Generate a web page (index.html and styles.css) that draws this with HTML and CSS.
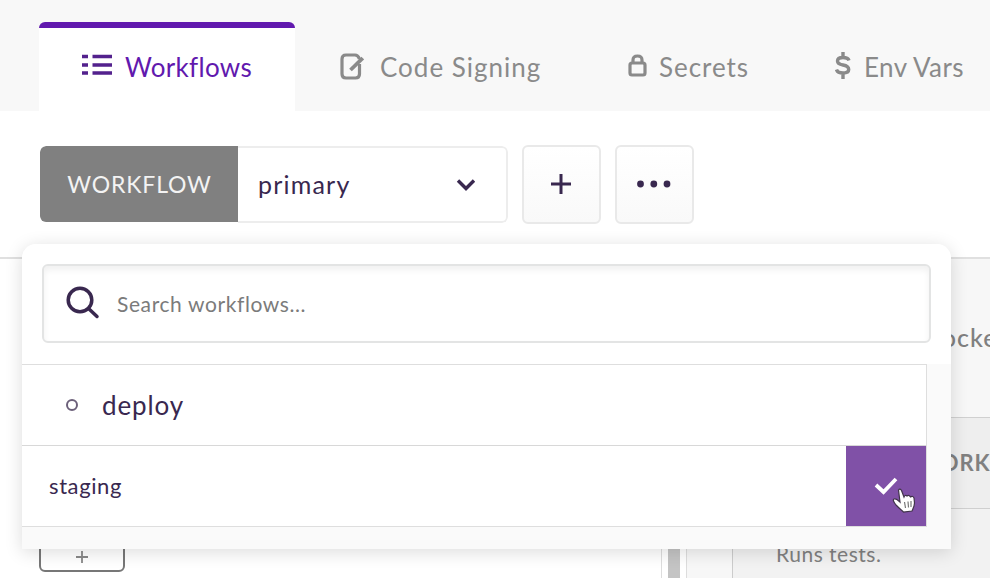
FILE: index.html
```html
<!DOCTYPE html>
<html lang="en">
<head>
<meta charset="utf-8">
<title>Workflows</title>
<link rel="stylesheet" href="styles.css">
</head>
<body>
<div class="app">
  <nav class="tabs">
    <a class="tab tab-active">
      <svg class="icon-list" width="30" height="22" viewBox="0 0 30 22" fill="none" stroke="currentColor" stroke-width="3.4"><path d="M0 2.500H6M0 11H6M0 19H6M10.500 2.500H30M10.500 11H30M10.500 19H30"/></svg>
      <span class="label-workflows">Workflows</span>
    </a>
    <a class="tab tab-signing">
      <svg width="24" height="27" viewBox="0 0 24 27" fill="none" stroke="currentColor" stroke-width="3.200"><path d="M19.500 6Q18 2 15 2H6Q2 2 2 6V21Q2 25 6 25H15.500Q19.500 25 19.500 21V11"/><path d="M10.500 17L22.700 5" stroke-width="3.800"/></svg>
      <span class="label-signing">Code Signing</span>
    </a>
    <a class="tab tab-secrets">
      <svg width="19" height="23" viewBox="0 0 19 23" fill="none" stroke="currentColor" stroke-width="3.200"><rect x="2" y="9" width="15" height="12" rx="2"/><path d="M5 10V6Q5 2 9.500 2T14 6V10"/></svg>
      <span class="label-secrets">Secrets</span>
    </a>
    <a class="tab tab-vars">
      <svg width="16" height="27" viewBox="0 0 16 27" fill="none" stroke="currentColor" stroke-width="3.400"><path d="M14 8.500Q13 5.500 8 5.500Q2.500 5.500 2.500 9Q2.500 12 8 13Q13.700 14 13.700 17.500Q13.700 21 8 21Q2.500 21 1.500 17.500M8 0V6M8 21V27"/></svg>
      <span class="label-vars">Env Vars</span>
    </a>
  </nav>

  <header class="toolbar">
    <div class="picker">
      <span class="picker-tag">WORKFLOW</span>
      <div class="picker-body">
        <span class="picker-value">primary</span>
        <svg class="chevron" width="20" height="14" viewBox="0 0 20 14" fill="none" stroke="currentColor" stroke-width="3.400"><path d="M2 2.500L10 10.500L18 2.500"/></svg>
      </div>
    </div>
    <button class="square"><svg width="22" height="22" viewBox="0 0 22 22" stroke="currentColor" stroke-width="3"><path d="M11 1V21M1 11H21"/></svg></button>
    <button class="square"><svg width="36" height="8" viewBox="0 0 36 8" fill="currentColor"><circle cx="4.500" cy="4" r="3.400"/><circle cx="17.800" cy="4" r="3.400"/><circle cx="31" cy="4" r="3.400"/></svg></button>
  </header>

  <main class="editor">
    <section class="canvas">
      <button class="add-step"><svg width="14" height="14" viewBox="0 0 14 14" stroke="currentColor" stroke-width="1.800"><path d="M7 1V13M1 7H13"/></svg></button>
    </section>
    <div class="scroll"><div class="thumb"></div></div>
    <section class="details">
      <div class="stack">Docker</div>
      <div class="section-title">WORK</div>
      <div class="description"><p>Runs tests.</p></div>
    </section>
  </main>

  <div class="menu">
    <div class="search-area">
      <div class="search">
        <svg width="34" height="34" viewBox="0 0 34 34" fill="none" stroke="currentColor" stroke-width="3.500" stroke-linecap="round"><circle cx="14" cy="14" r="11.800"/><path d="M22.500 22.500L31 30.500"/></svg>
        <span class="search-text">Search workflows...</span>
      </div>
    </div>
    <div class="options">
      <div class="option">
        <span class="dot"></span>
        <span class="deploy">deploy</span>
      </div>
      <div class="option option-edit">
        <span class="staging">staging</span>
        <span class="confirm"><svg width="24" height="18" viewBox="0 0 24 18" fill="none" stroke="currentColor" stroke-width="3.800"><path d="M2 8L9.500 15L22 2"/></svg></span>
      </div>
    </div>
    <svg class="cursor" width="26" height="28" viewBox="0 0 26 28"><path d="M6.500 4Q8 2 9.500 4.500L12 11Q13 8.500 15 10Q17 8.500 18.500 11Q21 9.500 22 12L22.500 17Q22.500 20 20 25L11.500 26Q8 23 4 19Q0 14 2 13Q4 12 8 16Z" fill="#fff" stroke="#40334a" stroke-width="1.200"/><path d="M12.500 16L13.500 22M16 15.500L16.500 21.500M19 15V21" stroke="#777" stroke-width="1.200"/></svg>
  </div>
</div>
</body>
</html>
```

FILE: styles.css
```css
* { box-sizing: border-box; }
body { margin: 0; font-family: Lato, "Noto Sans", sans-serif; font-variant-ligatures: none; color: #39284f; background: #fff; }
button { font: inherit; color: inherit; padding: 0; }
svg { display: block; flex: none; }
.app { position: relative; width: 990px; height: 578px; overflow: hidden; display: flex; flex-direction: column; }

.tabs { height: 111px; flex: none; padding: 22px 0 0 39px; display: flex; background: #f8f8f8; color: #8a8a8a; }
.tab { display: flex; align-items: center; height: 89px; font-size: 26px; line-height: 36px; white-space: nowrap; flex: none; }
.tab-active { width: 256px; padding: 0 0 6px 43px; gap: 13px; color: #6119ae; background: #fff; border-top: 6px solid #6119ae; border-radius: 6px 6px 0 0; }
.icon-list { color: #53218d; margin-top: -3px; }
.tab-signing { margin-left: 45px; gap: 16px; }
.tab-secrets { margin-left: 87px; gap: 12px; }
.tab-secrets svg { margin-top: -3px; }
.tab-vars { margin-left: 87px; gap: 13px; }
.tab-vars svg { margin-top: -3px; }
.label-workflows { width: 127px; letter-spacing: .3px; }
.label-signing { width: 161px; letter-spacing: 1px; }
.label-secrets { width: 89px; letter-spacing: .95px; }
.label-vars { width: 101px; letter-spacing: .4px; }

.toolbar { height: 147px; flex: none; padding: 34px 0 0 40px; display: flex; align-items: flex-start; gap: 14px; }
.picker { width: 468px; height: 77px; margin-top: 1px; display: flex; align-items: stretch; border-radius: 6px; overflow: hidden; }
.picker-tag { width: 198px; height: 76px; padding: 0 0 1px 1px; display: flex; align-items: center; justify-content: center; background: #808080; color: #f3f3f3; font-size: 23px; letter-spacing: .85px; border-radius: 6px 0 0 6px; }
.picker-body { flex: 1; padding-left: 20px; display: flex; align-items: center; border: 2px solid #ededed; border-left: 0; border-radius: 0 6px 6px 0; }
.picker-value { flex: 1; padding-bottom: 1px; font-size: 25px; line-height: 34px; letter-spacing: 1.2px; }
.chevron { margin-right: 30px; }
.square { width: 79px; height: 79px; display: flex; align-items: center; justify-content: center; border: 2px solid #e9e9e9; border-radius: 6px; background: linear-gradient(#fff, #f9f9f9); }
.square svg { margin: -1px 1px 0 0; }

.editor { flex: 1; display: flex; border-top: 2px solid #e0e0e0; margin-top: -1px; }
.canvas { width: 661px; flex: none; padding: 0 39px; display: flex; align-items: flex-start; }
.add-step { width: 86px; height: 60px; margin-top: 253px; padding-top: 30px; display: flex; align-items: center; justify-content: center; border: 2px solid #777; border-radius: 6px; background: #fff; color: #888; }
.scroll { width: 26px; flex: none; padding: 0 6px; border: solid #ddd; border-width: 0 1px; background: #fff; }
.thumb { height: 100%; background: #c4c4c4; }
.details { flex: 1; min-width: 0; background: #f7f7f7; color: #808080; display: flex; flex-direction: column; overflow: hidden; }
.stack { height: 159px; padding: 0 0 3px 235px; border-bottom: 1px solid #d0d0d0; background: #f7f7f7; display: flex; align-items: center; font-size: 25px; font-weight: 500; letter-spacing: 1px; }
.section-title { height: 91px; padding: 0 0 1px 230px; border-bottom: 1px solid #cfcfcf; background: #eee; display: flex; align-items: center; font-size: 22px; font-weight: 700; letter-spacing: .9px; }
.description { flex: 1; margin-left: 45px; padding: 31px 0 0 43px; border-left: 1px solid #ccc; background: #f2f2f2; }
.description p { margin: 0; font-size: 21px; line-height: 28px; letter-spacing: .5px; }

.menu { position: absolute; left: 22px; top: 244px; width: 929px; height: 305px; background: #fafafa; border-radius: 14px 14px 0 0; box-shadow: 0 3px 18px rgba(0, 0, 0, .14); }
.search-area { height: 120px; padding: 20px 20px 0 20px; background: #fff; border-radius: 14px 14px 0 0; }
.search { height: 79px; padding-left: 22px; display: flex; align-items: center; gap: 17px; border: 2px solid #e3e4e4; border-radius: 6px; box-shadow: inset 0 4px 6px rgba(0, 0, 0, .06); }
.search svg { margin-top: -1px; }
.search-text { font-size: 21px; letter-spacing: .6px; color: #7b7b7b; }
.options { width: 905px; border: solid #dedede; border-width: 1px 1px 1px 0; background: #fff; }
.option { height: 80px; display: flex; align-items: center; }
.option-edit { height: 81px; border-top: 1px solid #d8d8d8; }
.dot { width: 12px; height: 12px; margin-left: 44px; border: 2px solid #6c607a; border-radius: 50%; }
.deploy { margin-left: 24px; font-size: 26px; letter-spacing: .9px; }
.staging { margin-left: 27px; padding-bottom: 1px; font-size: 22px; letter-spacing: .6px; }
.confirm { width: 80px; height: 80px; margin-left: auto; display: flex; align-items: center; justify-content: center; background: #8051a7; color: #fff; }
.cursor { position: absolute; left: 870px; top: 242px; }
```
